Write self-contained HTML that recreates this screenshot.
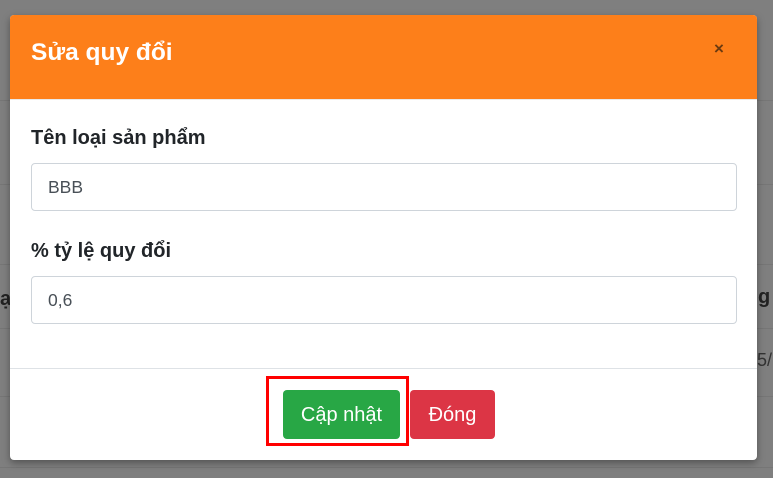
<!DOCTYPE html>
<html><head><meta charset="utf-8"><style>
body{margin:0;width:773px;height:478px;background:#7f7f7f;position:relative;overflow:hidden;font-family:"Liberation Sans",sans-serif}
.ln{position:absolute;left:0;right:0;height:1px;background:#767676}
.modal{position:absolute;left:10px;top:15px;width:747px;height:445px;background:#fff;border-radius:4px;overflow:hidden;box-shadow:0 3px 8px rgba(0,0,0,.35)}
.hd{position:absolute;left:0;top:0;right:0;height:84px;background:#fd7f1a;border-bottom:1px solid #e9e9e9}
.tt{position:absolute;left:21px;top:24px;color:#fff;font-size:24.5px;font-weight:bold}
.x{position:absolute;left:704px;top:24px;color:#6b3a10;font-size:17px;font-weight:bold}
.lb{position:absolute;left:21px;font-size:20px;font-weight:bold;color:#212529}
.in{position:absolute;left:21px;height:48px;border:1px solid #ced4da;border-radius:4px;box-sizing:border-box;width:706px;font-size:17.5px;color:#495057;padding:13px 0 0 16px}
.ft{position:absolute;left:0;right:0;top:353px;height:1px;background:#dee2e6}
.btn{position:absolute;top:375px;height:49px;border-radius:4px;color:#fff;font-size:20px;text-align:center;line-height:51px}
</style></head><body>
<div class="ln" style="top:100px"></div><div class="ln" style="top:184px"></div><div class="ln" style="top:264px"></div><div class="ln" style="top:328px"></div><div class="ln" style="top:396px"></div><div class="ln" style="top:467px"></div>
<div style="position:absolute;left:0;top:288px;font-size:20px;font-weight:bold;color:#222">ạ</div>
<div style="position:absolute;left:758px;top:286px;font-size:20px;font-weight:bold;color:#222">g</div>
<div style="position:absolute;left:757px;top:350px;font-size:18px;color:#333">5/</div>
<div class="modal">
<div class="hd"><div class="tt">Sửa quy đổi</div><div class="x">×</div></div>
<div class="lb" style="top:112px">Tên loại sản phẩm</div>
<div class="in" style="top:148px">BBB</div>
<div class="lb" style="top:225px">% tỷ lệ quy đổi</div>
<div class="in" style="top:261px">0,6</div>
<div class="ft"></div>
<div class="btn" style="left:273px;width:117px;background:#28a745">Cập nhật</div>
<div class="btn" style="left:400px;width:85px;background:#dc3545">Đóng</div>
<div style="position:absolute;left:256px;top:361px;width:143px;height:70px;border:3px solid #f00;box-sizing:border-box"></div>
</div>
</body></html>
